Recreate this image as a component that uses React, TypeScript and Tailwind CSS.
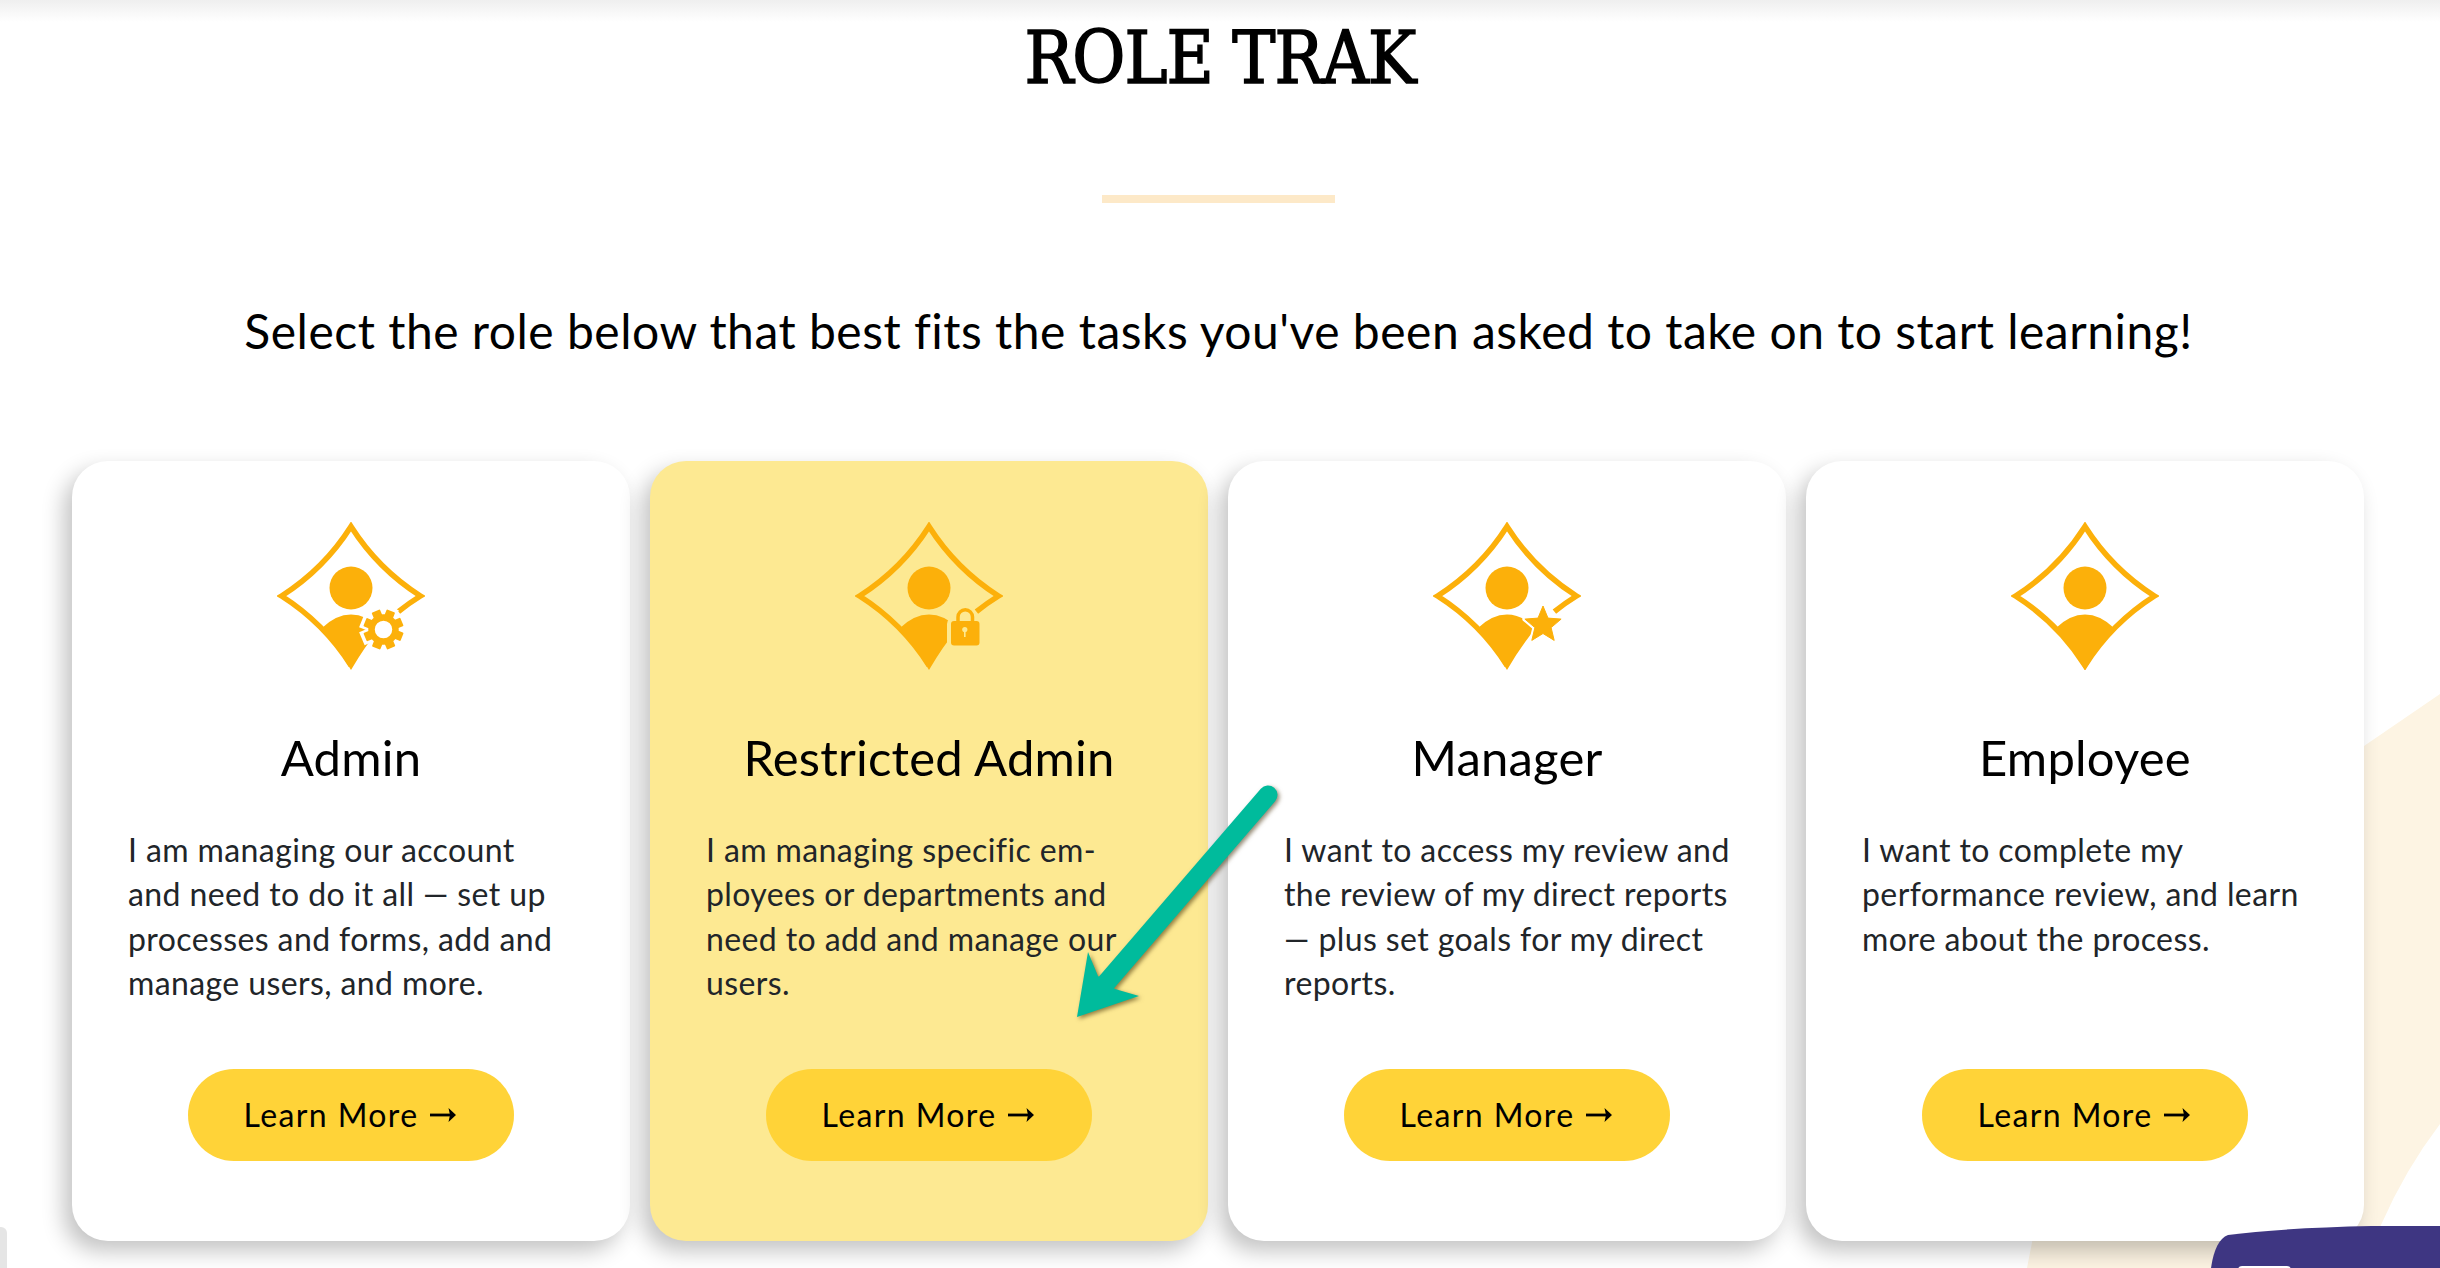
const bodyFont = "font-['Lato','Noto_Sans',sans-serif]"

const AMBER = '#fcb00a'

const starPoints = Array.from({ length: 10 }, (_, i) => {
  const r = i % 2 === 0 ? 19 : 8.5
  const a = (Math.PI / 5) * i - Math.PI / 2
  return `${(110 + r * Math.cos(a)).toFixed(1)},${(103 + r * Math.sin(a)).toFixed(1)}`
}).join(' ')

function GearBadge({ bg }: { bg: string }) {
  const teeth = [0, 45, 90, 135, 180, 225, 270, 315]
  return (
    <g>
      <circle cx="106.5" cy="107.5" r="17" fill={bg} />
      {teeth.map((deg) => (
        <rect key={deg} x="101.5" y="86" width="10" height="9" fill={bg} stroke={bg} strokeWidth="4" transform={`rotate(${deg + 22} 106.5 107.5)`} />
      ))}
      <circle cx="106.5" cy="107.5" r="12" fill="none" stroke={AMBER} strokeWidth="6.5" />
      {teeth.map((deg) => (
        <rect key={deg} x="102" y="87.5" width="9" height="8" rx="1" fill={AMBER} transform={`rotate(${deg + 22} 106.5 107.5)`} />
      ))}
    </g>
  )
}

function LockBadge({ bg }: { bg: string }) {
  return (
    <g>
      <rect x="96" y="99" width="28.5" height="24.5" rx="3" fill={AMBER} stroke={bg} strokeWidth="8" />
      <path d="M103 100 V95 A7.2 7.2 0 0 1 117.5 95 V100" fill="none" stroke={bg} strokeWidth="9" />
      <path d="M103 100 V95 A7.2 7.2 0 0 1 117.5 95 V100" fill="none" stroke={AMBER} strokeWidth="3.5" />
      <rect x="96" y="99" width="28.5" height="24.5" rx="3" fill={AMBER} />
      <circle cx="109.8" cy="107.5" r="2.6" fill={bg} />
      <rect x="109" y="107.5" width="1.6" height="7.5" fill={bg} />
    </g>
  )
}

function StarBadge({ bg }: { bg: string }) {
  return (
    <g>
      <polygon points={starPoints} fill={bg} stroke={bg} strokeWidth="5" strokeLinejoin="round" />
      <polygon points={starPoints} fill={AMBER} stroke={AMBER} strokeWidth="1" strokeLinejoin="round" />
    </g>
  )
}

function RoleIcon({ badge, bg }: { badge?: 'gear' | 'lock' | 'star'; bg: string }) {
  return (
    <svg viewBox="0 0 148 148" className="w-[148px] h-[148px] shrink-0">
      <path
        d={
          badge
            ? 'M121.4 89.6 Q131.7 81.3 143.5 74 Q101 47 74 4.5 Q47 47 4.5 74 Q47 101 74 143.5'
            : 'M74 4.5 Q101 47 143.5 74 Q101 101 74 143.5 Q47 101 4.5 74 Q47 47 74 4.5Z'
        }
        fill="none"
        stroke={AMBER}
        strokeWidth="5.5"
        strokeMiterlimit="10"
      />
      <circle cx="74" cy="66" r="21.5" fill={AMBER} />
      <path d="M74 148 Q60 124 45 106 Q59 92.5 74 92.5 Q89 92.5 103 106 Q88 124 74 148Z" fill={AMBER} />
      {badge === 'gear' && <GearBadge bg={bg} />}
      {badge === 'lock' && <LockBadge bg={bg} />}
      {badge === 'star' && <StarBadge bg={bg} />}
    </svg>
  )
}

function ArrowRight() {
  return (
    <svg viewBox="0 0 26 16" className="w-[26px] h-[16px] ml-[11px] mr-[3px]">
      <rect x="0" y="6.6" width="20" height="2.8" fill="#000" />
      <path d="M18.5 1 L26 8 L18.5 15 L20 8Z" fill="#000" />
    </svg>
  )
}

const roles = [
  {
    name: 'Admin',
    badge: 'gear' as const,
    lines: ['I am managing our account', 'and need to do it all — set up', 'processes and forms, add and', 'manage users, and more.'],
  },
  {
    name: 'Restricted Admin',
    badge: 'lock' as const,
    active: true,
    lines: ['I am managing specific em-', 'ployees or departments and', 'need to add and manage our', 'users.'],
  },
  {
    name: 'Manager',
    badge: 'star' as const,
    lines: ['I want to access my review and', 'the review of my direct reports', '— plus set goals for my direct', 'reports.'],
  },
  {
    name: 'Employee',
    lines: ['I want to complete my', 'performance review, and learn', 'more about the process.'],
  },
]

function RoleCard({ role }: { role: (typeof roles)[number] }) {
  const bg = role.active ? '#fde992' : '#ffffff'
  return (
    <div
      className={`flex flex-col items-center h-[780px] rounded-[36px] pt-[61px] pb-[80px] px-[56px] shadow-[-8px_10px_22px_rgba(0,0,0,0.24)] ${
        role.active ? 'bg-[#fde992]' : 'bg-white'
      }`}
    >
      <RoleIcon badge={role.badge} bg={bg} />
      <h2 className="mt-[58px] text-[49px] leading-[58px] tracking-[0.2px] text-black whitespace-nowrap">{role.name}</h2>
      <div className="mt-[42px] w-full text-[32px] leading-[44.3px] tracking-[0.4px] text-[#212529]">
        {role.lines.map((line) => (
          <div key={line} className="whitespace-nowrap">
            {line}
          </div>
        ))}
      </div>
      <button
        type="button"
        className="mt-auto flex items-center justify-center w-[326px] h-[92px] shrink-0 rounded-full bg-[#ffd338] text-[32px] tracking-[1.4px] text-black"
      >
        Learn More
        <ArrowRight />
      </button>
    </div>
  )
}

export default function App() {
  return (
    <div className={`relative w-[2440px] h-[1268px] overflow-hidden bg-white ${bodyFont}`}>
      {/* cream backdrop shape behind the cards */}
      <svg viewBox="0 0 2440 1268" className="absolute inset-0 w-[2440px] h-[1268px]">
        <path d="M2027 1268 L2060 1100 L2364 746 L2440 694 L2440 1124 Q2405 1170 2381 1225 L2362 1268Z" fill="#fdf4e3" />
      </svg>

      <div className="absolute top-0 left-0 right-0 h-[22px] bg-gradient-to-b from-[#efefef] to-white" />

      <div className="relative flex flex-col items-center">
        <h1 className="mt-[12px] h-[92px] font-['DejaVu_Serif',serif] [font-stretch:condensed] font-normal text-[72px] leading-[92px] tracking-[-1px] [-webkit-text-stroke:1.5px_black] text-black whitespace-nowrap">
          ROLE TRAK
        </h1>
        <div className="mt-[91px] mr-[3px] w-[233px] h-[8px] bg-[#fde9c8]" />
        <p className="mt-[96px] mr-[3px] h-[64px] text-[48px] leading-[64px] tracking-[0.5px] text-black whitespace-nowrap">
          Select the role below that best fits the tasks you've been asked to take on to start learning!
        </p>
        <div className="mt-[98px] w-full pl-[72px] pr-[76px] grid grid-cols-4 gap-[20px]">
          {roles.map((role) => (
            <RoleCard key={role.name} role={role} />
          ))}
        </div>
      </div>

      {/* chat widget peeking in from the bottom edge */}
      <svg viewBox="2200 1220 240 48" className="absolute left-[2200px] top-[1220px] w-[240px] h-[48px]">
        <path d="M2211 1268 Q2215 1240 2228 1235 Q2280 1228 2372 1226 L2440 1226 L2440 1268Z" fill="#3e3682" />
        <rect x="2238" y="1266" width="53" height="8" rx="4" fill="#fff" />
      </svg>
      <div className="absolute left-0 top-[1227px] w-[7px] h-[41px] rounded-tr-[6px] bg-[#e5e5e5]" />

      {/* teal annotation arrow */}
      <svg viewBox="0 0 2440 1268" className="absolute inset-0 w-[2440px] h-[1268px] pointer-events-none drop-shadow-[2px_2px_2px_rgba(60,40,0,0.55)]">
        <path d="M1268 795 L1106 983" stroke="#00bb9c" strokeWidth="19" strokeLinecap="round" fill="none" />
        <polygon points="1077,1017 1088,952 1098,976 1115,989 1139,996" fill="#00bb9c" />
      </svg>
    </div>
  )
}
